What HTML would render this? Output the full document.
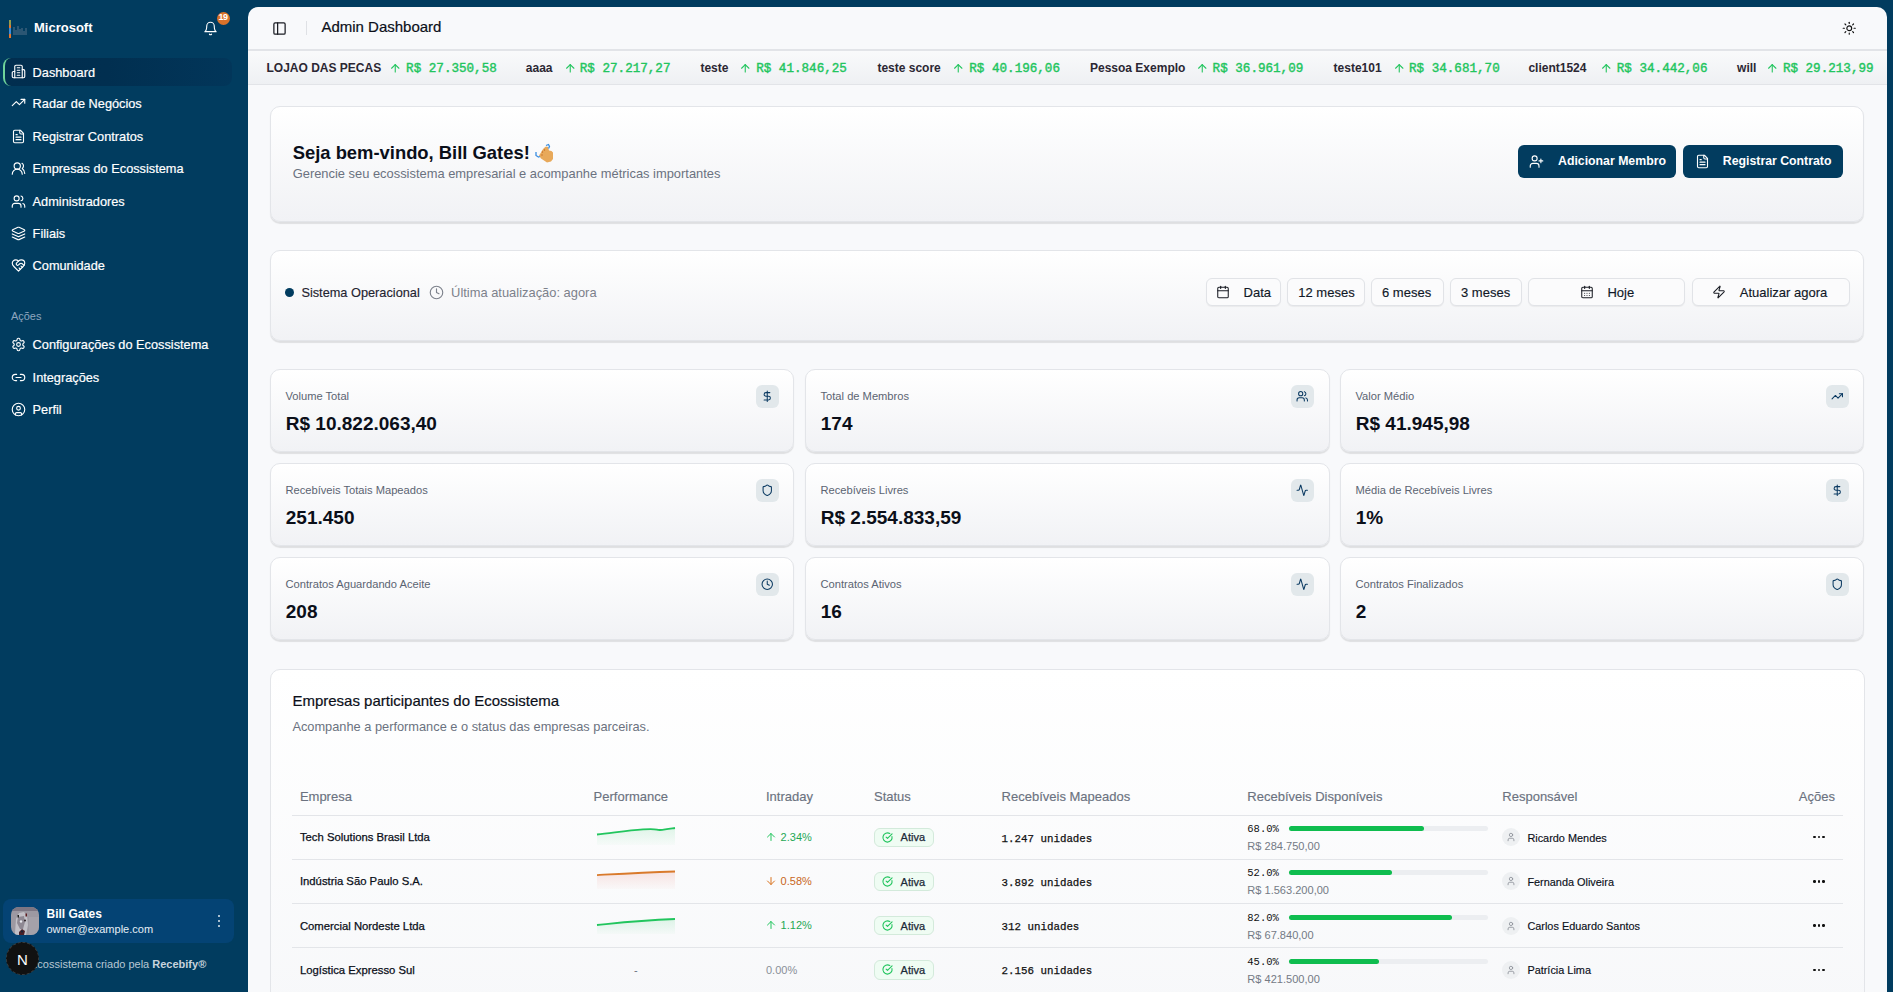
<!DOCTYPE html><html><head><meta charset="utf-8"><style>
*{box-sizing:border-box;margin:0;padding:0}
html,body{width:1893px;height:992px;overflow:hidden}
body{background:#013c5f;font-family:"Liberation Sans",sans-serif;position:relative}
.t{position:absolute;white-space:nowrap;line-height:1}
.i{position:absolute;display:block;overflow:visible}
.r{position:absolute}
</style></head><body><svg class="i" style="left:8px;top:19px" width="20" height="20" viewBox="0 0 20 20"><rect x="1" y="1" width="2" height="18" fill="#e8762c"/><rect x="1.5" y="1" width="1" height="5" fill="#3fbf6f"/><rect x="1" y="9" width="2" height="6" fill="#3a8bd8"/><path d="M6 8v8M8 11v5M10 7v9M12 10v6M14 9v7M16 12v4M18 9v7" stroke="#6c7f95" stroke-width="1" opacity=".8"/></svg>
<div class="t" style="left:34px;top:21.45px;font-size:13px;color:#fff;font-weight:bold;">Microsoft</div>
<svg class="i" style="left:203px;top:21px;" width="15" height="15" viewBox="0 0 24 24" fill="none" stroke="#fff" stroke-width="1.8" stroke-linecap="round" stroke-linejoin="round"><path d="M6 8a6 6 0 0 1 12 0c0 7 3 9 3 9H3s3-2 3-9"/><path d="M10.3 21a1.94 1.94 0 0 0 3.4 0"/></svg>
<div class="r" style="left:216.5px;top:11.5px;width:13px;height:13px;border-radius:50%;background:#d9722a"></div>
<div class="t" style="left:216.5px;top:12.5px;width:13px;text-align:center;font-size:9px;color:#fff;font-weight:bold;letter-spacing:-0.6px">19</div>
<div class="r" style="left:3px;top:58px;width:229px;height:28px;background:linear-gradient(90deg,#012e4f 0%,#012f50 45%,#02365a 100%);border-radius:8px;border-left:2px solid #6fd39a"></div>
<svg class="i" style="left:11px;top:64.4px;" width="15" height="15" viewBox="0 0 24 24" fill="none" stroke="#fff" stroke-width="1.8" stroke-linecap="round" stroke-linejoin="round"><path d="M6 22V4a2 2 0 0 1 2-2h8a2 2 0 0 1 2 2v18Z"/><path d="M6 12H4a2 2 0 0 0-2 2v6a2 2 0 0 0 2 2h2"/><path d="M18 9h2a2 2 0 0 1 2 2v9a2 2 0 0 1-2 2h-2"/><path d="M10 6h4"/><path d="M10 10h4"/><path d="M10 14h4"/><path d="M10 18h4"/></svg>
<div class="t" style="left:32.6px;top:66.56px;font-size:12.75px;color:#fff;-webkit-text-stroke:0.2px #fff">Dashboard</div>
<svg class="i" style="left:11px;top:95.4px;" width="15" height="15" viewBox="0 0 24 24" fill="none" stroke="#fff" stroke-width="1.8" stroke-linecap="round" stroke-linejoin="round"><polyline points="22 7 13.5 15.5 8.5 10.5 2 17"/><polyline points="16 7 22 7 22 13"/></svg>
<div class="t" style="left:32.6px;top:97.56px;font-size:12.75px;color:#fff;-webkit-text-stroke:0.2px #fff">Radar de Negócios</div>
<svg class="i" style="left:11px;top:128.8px;" width="15" height="15" viewBox="0 0 24 24" fill="none" stroke="#fff" stroke-width="1.8" stroke-linecap="round" stroke-linejoin="round"><path d="M15 2H6a2 2 0 0 0-2 2v16a2 2 0 0 0 2 2h12a2 2 0 0 0 2-2V7Z"/><path d="M14 2v4a2 2 0 0 0 2 2h4"/><path d="M10 9H8"/><path d="M16 13H8"/><path d="M16 17H8"/></svg>
<div class="t" style="left:32.6px;top:130.96px;font-size:12.75px;color:#fff;-webkit-text-stroke:0.2px #fff">Registrar Contratos</div>
<svg class="i" style="left:11px;top:161.0px;" width="15" height="15" viewBox="0 0 24 24" fill="none" stroke="#fff" stroke-width="1.8" stroke-linecap="round" stroke-linejoin="round"><path d="M18 21a8 8 0 0 0-16 0"/><circle cx="10" cy="8" r="5"/><path d="M22 20c0-3.37-2-6.5-4-8a5 5 0 0 0-.45-8.3"/></svg>
<div class="t" style="left:32.6px;top:163.16px;font-size:12.75px;color:#fff;-webkit-text-stroke:0.2px #fff">Empresas do Ecossistema</div>
<svg class="i" style="left:11px;top:193.6px;" width="15" height="15" viewBox="0 0 24 24" fill="none" stroke="#fff" stroke-width="1.8" stroke-linecap="round" stroke-linejoin="round"><path d="M16 21v-2a4 4 0 0 0-4-4H6a4 4 0 0 0-4 4v2"/><circle cx="9" cy="7" r="4"/><path d="M22 21v-2a4 4 0 0 0-3-3.87"/><path d="M16 3.13a4 4 0 0 1 0 7.75"/></svg>
<div class="t" style="left:32.6px;top:195.76px;font-size:12.75px;color:#fff;-webkit-text-stroke:0.2px #fff">Administradores</div>
<svg class="i" style="left:11px;top:225.7px;" width="15" height="15" viewBox="0 0 24 24" fill="none" stroke="#fff" stroke-width="1.8" stroke-linecap="round" stroke-linejoin="round"><path d="m12.83 2.18a2 2 0 0 0-1.66 0L2.6 6.08a1 1 0 0 0 0 1.83l8.58 3.91a2 2 0 0 0 1.66 0l8.58-3.9a1 1 0 0 0 0-1.83Z"/><path d="m22 17.65-9.17 4.16a2 2 0 0 1-1.66 0L2 17.65"/><path d="m22 12.65-9.17 4.16a2 2 0 0 1-1.66 0L2 12.65"/></svg>
<div class="t" style="left:32.6px;top:227.86px;font-size:12.75px;color:#fff;-webkit-text-stroke:0.2px #fff">Filiais</div>
<svg class="i" style="left:11px;top:258.0px;" width="15" height="15" viewBox="0 0 24 24" fill="none" stroke="#fff" stroke-width="1.8" stroke-linecap="round" stroke-linejoin="round"><path d="M19 14c1.49-1.46 3-3.21 3-5.5A5.5 5.5 0 0 0 16.5 3c-1.76 0-3 .5-4.5 2-1.5-1.5-2.74-2-4.5-2A5.5 5.5 0 0 0 2 8.5c0 2.3 1.5 4.05 3 5.5l7 7Z"/><path d="M12 5 9.04 7.96a2.17 2.17 0 0 0 0 3.08c.82.82 2.13.85 3 .07l2.07-1.9a2.82 2.82 0 0 1 3.79 0l2.96 2.66"/><path d="m18 15-2-2"/><path d="m15 18-2-2"/></svg>
<div class="t" style="left:32.6px;top:260.16px;font-size:12.75px;color:#fff;-webkit-text-stroke:0.2px #fff">Comunidade</div>
<div class="t" style="left:10.9px;top:310.65px;font-size:11px;color:#8ea6bf;">Ações</div>
<svg class="i" style="left:11px;top:336.7px;" width="15" height="15" viewBox="0 0 24 24" fill="none" stroke="#fff" stroke-width="1.8" stroke-linecap="round" stroke-linejoin="round"><path d="M12.22 2h-.44a2 2 0 0 0-2 2v.18a2 2 0 0 1-1 1.73l-.43.25a2 2 0 0 1-2 0l-.15-.08a2 2 0 0 0-2.73.73l-.22.38a2 2 0 0 0 .73 2.73l.15.1a2 2 0 0 1 1 1.72v.51a2 2 0 0 1-1 1.74l-.15.09a2 2 0 0 0-.73 2.73l.22.38a2 2 0 0 0 2.730.73l.15-.08a2 2 0 0 1 2 0l.43.25a2 2 0 0 1 1 1.73V20a2 2 0 0 0 2 2h.44a2 2 0 0 0 2-2v-.18a2 2 0 0 1 1-1.73l.43-.25a2 2 0 0 1 2 0l.15.08a2 2 0 0 0 2.73-.73l.22-.39a2 2 0 0 0-.73-2.730l-.15-.08a2 2 0 0 1-1-1.74v-.5a2 2 0 0 1 1-1.74l.15-.09a2 2 0 0 0 .73-2.73l-.22-.38a2 2 0 0 0-2.73-.73l-.15.08a2 2 0 0 1-2 0l-.43-.25a2 2 0 0 1-1-1.73V4a2 2 0 0 0-2-2z"/><circle cx="12" cy="12" r="3"/></svg>
<div class="t" style="left:32.6px;top:338.86px;font-size:12.75px;color:#fff;-webkit-text-stroke:0.2px #fff">Configurações do Ecossistema</div>
<svg class="i" style="left:11px;top:369.5px;" width="15" height="15" viewBox="0 0 24 24" fill="none" stroke="#fff" stroke-width="1.8" stroke-linecap="round" stroke-linejoin="round"><path d="M9 17H7A5 5 0 0 1 7 7h2"/><path d="M15 7h2a5 5 0 1 1 0 10h-2"/><line x1="8" x2="16" y1="12" y2="12"/></svg>
<div class="t" style="left:32.6px;top:371.66px;font-size:12.75px;color:#fff;-webkit-text-stroke:0.2px #fff">Integrações</div>
<svg class="i" style="left:11px;top:401.7px;" width="15" height="15" viewBox="0 0 24 24" fill="none" stroke="#fff" stroke-width="1.8" stroke-linecap="round" stroke-linejoin="round"><circle cx="12" cy="12" r="10"/><circle cx="12" cy="10" r="3"/><path d="M7 20.662V19a2 2 0 0 1 2-2h6a2 2 0 0 1 2 2v1.662"/></svg>
<div class="t" style="left:32.6px;top:403.86px;font-size:12.75px;color:#fff;-webkit-text-stroke:0.2px #fff">Perfil</div>
<div class="r" style="left:3px;top:899px;width:231px;height:44px;background:#044374;border-radius:8px"></div>
<svg class="i" style="left:11px;top:907px" width="28" height="28" viewBox="0 0 28 28"><defs><clipPath id="av"><rect width="28" height="28" rx="8"/></clipPath></defs><g clip-path="url(#av)"><rect width="28" height="28" fill="#9d99a2"/><rect x="0" y="0" width="28" height="4" fill="#7d7683"/><path d="M4 26 L5 12 L8 6 L13 5 L16 9 L17 18 L15 28 L3 28Z" fill="#c2c0c7"/><path d="M7 10 L13 9 L14 15 L12 22 L9 22 L6 16Z" fill="#8e8893"/><circle cx="10" cy="14.5" r="1.2" fill="#e8e8ee"/><circle cx="14" cy="13.5" r="1" fill="#2a1f25"/><rect x="6.5" y="8" width="1.5" height="2.5" fill="#222"/><rect x="14.5" y="6.5" width="1.5" height="3" fill="#5b1a1f"/><path d="M8 25 L11 22 L14 24 L13 28 L8 28Z" fill="#4a2028"/><circle cx="11" cy="24.5" r="1" fill="#12233a"/><rect x="18" y="10" width="10" height="18" fill="#a8a4ad" opacity=".7"/></g></svg>
<div class="t" style="left:46.5px;top:907.80px;font-size:12px;color:#fff;font-weight:bold;">Bill Gates</div>
<div class="t" style="left:46.5px;top:924.15px;font-size:11px;color:#e6eef5;">owner@example.com</div>
<div class="r" style="left:218px;top:915px;width:2.4px;height:2.4px;background:#dfe7ee;border-radius:50%"></div>
<div class="r" style="left:218px;top:920px;width:2.4px;height:2.4px;background:#dfe7ee;border-radius:50%"></div>
<div class="r" style="left:218px;top:925px;width:2.4px;height:2.4px;background:#dfe7ee;border-radius:50%"></div>
<div class="t" style="left:30px;top:959.15px;font-size:11px;color:#b8c7d4;">Ecossistema criado pela <b style="color:#c8d3dd">Recebify®</b></div>
<div class="r" style="left:6px;top:942px;width:33px;height:33px;border-radius:50%;background:#111;border:1px dashed #3a3a3a"></div>
<div class="t" style="left:17px;top:951.75px;font-size:15px;color:#fff;">N</div>
<div class="r" style="left:248px;top:7px;width:1639px;height:985px;background:#f8f9fb;border-radius:10px 10px 0 0"></div>
<svg class="i" style="left:272px;top:21px;" width="15" height="15" viewBox="0 0 24 24" fill="none" stroke="#1a1d24" stroke-width="2" stroke-linecap="round" stroke-linejoin="round"><rect width="18" height="18" x="3" y="3" rx="2"/><path d="M9 3v18"/></svg>
<div class="r" style="left:306px;top:21px;width:1px;height:14px;background:#dfe1e5"></div>
<div class="t" style="left:321.4px;top:18.95px;font-size:15px;color:#0b0f19;-webkit-text-stroke:0.2px #0b0f19">Admin Dashboard</div>
<svg class="i" style="left:1842px;top:20.5px;" width="14.5" height="14.5" viewBox="0 0 24 24" fill="none" stroke="#111" stroke-width="1.9" stroke-linecap="round" stroke-linejoin="round"><circle cx="12" cy="12" r="4"/><path d="M12 2v2"/><path d="M12 20v2"/><path d="m4.93 4.93 1.41 1.41"/><path d="m17.66 17.66 1.41 1.41"/><path d="M2 12h2"/><path d="M20 12h2"/><path d="m6.34 17.66-1.41 1.41"/><path d="m19.07 4.93-1.41 1.41"/></svg>
<div class="r" style="left:248px;top:49px;width:1639px;height:1.5px;background:#e2e4e8"></div>
<div class="r" style="left:248px;top:50.5px;width:1639px;height:34px;background:linear-gradient(#f9fafb,#eef0f3)"></div>
<div class="r" style="left:248px;top:84px;width:1639px;height:1px;background:#e2e4e8"></div>
<div class="t" style="left:266.5px;top:62.00px;font-size:12.0px;color:#2b2733;font-weight:bold;">LOJAO DAS PECAS</div>
<svg class="i" style="left:389.1px;top:62px;" width="12.5" height="12.5" viewBox="0 0 24 24" fill="none" stroke="#22c55e" stroke-width="2.1" stroke-linecap="round" stroke-linejoin="round"><path d="m5 12 7-7 7 7"/><path d="M12 19V5"/></svg>
<div class="t" style="left:406.1px;top:62.62px;font-size:12.6px;color:#22c55e;font-family:'Liberation Mono',monospace;-webkit-text-stroke:0.4px #22c55e">R$ 27.350,58</div>
<div class="t" style="left:525.8px;top:62.00px;font-size:12.0px;color:#2b2733;font-weight:bold;">aaaa</div>
<svg class="i" style="left:563.5px;top:62px;" width="12.5" height="12.5" viewBox="0 0 24 24" fill="none" stroke="#22c55e" stroke-width="2.1" stroke-linecap="round" stroke-linejoin="round"><path d="m5 12 7-7 7 7"/><path d="M12 19V5"/></svg>
<div class="t" style="left:579.8px;top:62.62px;font-size:12.6px;color:#22c55e;font-family:'Liberation Mono',monospace;-webkit-text-stroke:0.4px #22c55e">R$ 27.217,27</div>
<div class="t" style="left:700.4px;top:62.00px;font-size:12.0px;color:#2b2733;font-weight:bold;">teste</div>
<svg class="i" style="left:739.4px;top:62px;" width="12.5" height="12.5" viewBox="0 0 24 24" fill="none" stroke="#22c55e" stroke-width="2.1" stroke-linecap="round" stroke-linejoin="round"><path d="m5 12 7-7 7 7"/><path d="M12 19V5"/></svg>
<div class="t" style="left:756.2px;top:62.62px;font-size:12.6px;color:#22c55e;font-family:'Liberation Mono',monospace;-webkit-text-stroke:0.4px #22c55e">R$ 41.846,25</div>
<div class="t" style="left:877.4px;top:62.00px;font-size:12.0px;color:#2b2733;font-weight:bold;">teste score</div>
<svg class="i" style="left:952.3px;top:62px;" width="12.5" height="12.5" viewBox="0 0 24 24" fill="none" stroke="#22c55e" stroke-width="2.1" stroke-linecap="round" stroke-linejoin="round"><path d="m5 12 7-7 7 7"/><path d="M12 19V5"/></svg>
<div class="t" style="left:969.3px;top:62.62px;font-size:12.6px;color:#22c55e;font-family:'Liberation Mono',monospace;-webkit-text-stroke:0.4px #22c55e">R$ 40.196,06</div>
<div class="t" style="left:1090px;top:62.00px;font-size:12.0px;color:#2b2733;font-weight:bold;">Pessoa Exemplo</div>
<svg class="i" style="left:1196.1px;top:62px;" width="12.5" height="12.5" viewBox="0 0 24 24" fill="none" stroke="#22c55e" stroke-width="2.1" stroke-linecap="round" stroke-linejoin="round"><path d="m5 12 7-7 7 7"/><path d="M12 19V5"/></svg>
<div class="t" style="left:1212.6px;top:62.62px;font-size:12.6px;color:#22c55e;font-family:'Liberation Mono',monospace;-webkit-text-stroke:0.4px #22c55e">R$ 36.961,09</div>
<div class="t" style="left:1333.6px;top:62.00px;font-size:12.0px;color:#2b2733;font-weight:bold;">teste101</div>
<svg class="i" style="left:1392.5px;top:62px;" width="12.5" height="12.5" viewBox="0 0 24 24" fill="none" stroke="#22c55e" stroke-width="2.1" stroke-linecap="round" stroke-linejoin="round"><path d="m5 12 7-7 7 7"/><path d="M12 19V5"/></svg>
<div class="t" style="left:1409.0px;top:62.62px;font-size:12.6px;color:#22c55e;font-family:'Liberation Mono',monospace;-webkit-text-stroke:0.4px #22c55e">R$ 34.681,70</div>
<div class="t" style="left:1528.4px;top:62.00px;font-size:12.0px;color:#2b2733;font-weight:bold;">client1524</div>
<svg class="i" style="left:1600.2px;top:62px;" width="12.5" height="12.5" viewBox="0 0 24 24" fill="none" stroke="#22c55e" stroke-width="2.1" stroke-linecap="round" stroke-linejoin="round"><path d="m5 12 7-7 7 7"/><path d="M12 19V5"/></svg>
<div class="t" style="left:1616.8px;top:62.62px;font-size:12.6px;color:#22c55e;font-family:'Liberation Mono',monospace;-webkit-text-stroke:0.4px #22c55e">R$ 34.442,06</div>
<div class="t" style="left:1737.1px;top:62.00px;font-size:12.0px;color:#2b2733;font-weight:bold;">will</div>
<svg class="i" style="left:1766.3px;top:62px;" width="12.5" height="12.5" viewBox="0 0 24 24" fill="none" stroke="#22c55e" stroke-width="2.1" stroke-linecap="round" stroke-linejoin="round"><path d="m5 12 7-7 7 7"/><path d="M12 19V5"/></svg>
<div class="t" style="left:1782.9px;top:62.62px;font-size:12.6px;color:#22c55e;font-family:'Liberation Mono',monospace;-webkit-text-stroke:0.4px #22c55e">R$ 29.213,99</div>
<div class="r" style="left:270px;top:106px;width:1594px;height:116px;border-radius:10px;border:1px solid #e3e5e9;background:linear-gradient(#ffffff,#f1f2f5);box-shadow:0 1.5px 1px rgba(0,0,0,0.10)"></div>
<div class="t" style="left:292.7px;top:143.66px;font-size:18.4px;color:#0b0f19;font-weight:bold;">Seja bem-vindo, Bill Gates!</div>
<svg class="i" style="left:534px;top:142px" width="22" height="22" viewBox="0 0 22 22"><path d="M5 13.5 L7 10.5 L8 8.5 L10 6 L12 4.5 L14 5 L15 8.5 L17.5 9 L19 10.5 L19 17 L17 19.5 L13 20.5 L10 18.5 L7 16.5 Z" fill="#e8a95a"/><circle cx="10.5" cy="8" r=".7" fill="#c46a26"/><circle cx="8.5" cy="10" r=".7" fill="#c46a26"/><circle cx="8" cy="13" r=".7" fill="#c46a26"/><path d="M12 3.5 L14.5 2.5 L15.5 4.5 L14.5 6.5" stroke="#3b8ee0" stroke-width="1.3" fill="none"/><path d="M2 10 L2 13.5 L4.5 15 L6 14.5" stroke="#3b8ee0" stroke-width="1.3" fill="none"/></svg>
<div class="t" style="left:292.7px;top:167.73px;font-size:12.9px;color:#6b7280;">Gerencie seu ecossistema empresarial e acompanhe métricas importantes</div>
<div class="r" style="left:1518px;top:145px;width:158px;height:33px;background:#023c5f;border-radius:6px"></div>
<svg class="i" style="left:1529px;top:154px;" width="15" height="15" viewBox="0 0 24 24" fill="none" stroke="#fff" stroke-width="1.8" stroke-linecap="round" stroke-linejoin="round"><path d="M16 21v-2a4 4 0 0 0-4-4H6a4 4 0 0 0-4 4v2"/><circle cx="9" cy="7" r="4"/><line x1="19" x2="19" y1="8" y2="14"/><line x1="22" x2="16" y1="11" y2="11"/></svg>
<div class="t" style="left:1558px;top:154.74px;font-size:12.3px;color:#fff;font-weight:bold;">Adicionar Membro</div>
<div class="r" style="left:1683px;top:145px;width:160px;height:33px;background:#023c5f;border-radius:6px"></div>
<svg class="i" style="left:1695px;top:154px;" width="15" height="15" viewBox="0 0 24 24" fill="none" stroke="#fff" stroke-width="1.8" stroke-linecap="round" stroke-linejoin="round"><path d="M15 2H6a2 2 0 0 0-2 2v16a2 2 0 0 0 2 2h12a2 2 0 0 0 2-2V7Z"/><path d="M14 2v4a2 2 0 0 0 2 2h4"/><path d="M10 9H8"/><path d="M16 13H8"/><path d="M16 17H8"/></svg>
<div class="t" style="left:1722.8px;top:154.74px;font-size:12.3px;color:#fff;font-weight:bold;">Registrar Contrato</div>
<div class="r" style="left:270px;top:250px;width:1594px;height:91px;border-radius:10px;border:1px solid #e3e5e9;background:linear-gradient(#ffffff,#f1f2f5);box-shadow:0 1.5px 1px rgba(0,0,0,0.10)"></div>
<div class="r" style="left:285px;top:288.3px;width:9px;height:9px;border-radius:50%;background:#013c5f"></div>
<div class="t" style="left:301.4px;top:286.96px;font-size:12.75px;color:#1f2430;-webkit-text-stroke:0.15px #1f2430">Sistema Operacional</div>
<svg class="i" style="left:428.5px;top:285px;" width="15" height="15" viewBox="0 0 24 24" fill="none" stroke="#7c818b" stroke-width="1.8" stroke-linecap="round" stroke-linejoin="round"><circle cx="12" cy="12" r="10"/><polyline points="12 6 12 12 16 14"/></svg>
<div class="t" style="left:451.1px;top:286.84px;font-size:12.9px;color:#7c818b;">Última atualização: agora</div>
<div class="r" style="left:1206px;top:278px;width:75px;height:28px;background:#fbfbfc;border:1px solid #e1e3e7;border-radius:6px;box-shadow:0 1px 1px rgba(0,0,0,0.05)"></div>
<svg class="i" style="left:1216.3px;top:285px;" width="14" height="14" viewBox="0 0 24 24" fill="none" stroke="#1a1d24" stroke-width="1.8" stroke-linecap="round" stroke-linejoin="round"><path d="M8 2v4"/><path d="M16 2v4"/><rect width="18" height="18" x="3" y="4" rx="2"/><path d="M3 10h18"/></svg>
<div class="t" style="left:1243.6px;top:286.15px;font-size:13px;color:#111827;-webkit-text-stroke:0.15px #111827">Data</div>
<div class="r" style="left:1286.5px;top:278px;width:78.0px;height:28px;background:#fbfbfc;border:1px solid #e1e3e7;border-radius:6px;box-shadow:0 1px 1px rgba(0,0,0,0.05)"></div>
<div class="t" style="left:1298.3px;top:286.15px;font-size:13px;color:#111827;-webkit-text-stroke:0.15px #111827">12 meses</div>
<div class="r" style="left:1370.5px;top:278px;width:73.0px;height:28px;background:#fbfbfc;border:1px solid #e1e3e7;border-radius:6px;box-shadow:0 1px 1px rgba(0,0,0,0.05)"></div>
<div class="t" style="left:1382px;top:286.15px;font-size:13px;color:#111827;-webkit-text-stroke:0.15px #111827">6 meses</div>
<div class="r" style="left:1449.5px;top:278px;width:72.5px;height:28px;background:#fbfbfc;border:1px solid #e1e3e7;border-radius:6px;box-shadow:0 1px 1px rgba(0,0,0,0.05)"></div>
<div class="t" style="left:1461px;top:286.15px;font-size:13px;color:#111827;-webkit-text-stroke:0.15px #111827">3 meses</div>
<div class="r" style="left:1528px;top:278px;width:157px;height:28px;background:#fbfbfc;border:1px solid #e1e3e7;border-radius:6px;box-shadow:0 1px 1px rgba(0,0,0,0.05)"></div>
<svg class="i" style="left:1579.8px;top:285px;" width="14" height="14" viewBox="0 0 24 24" fill="none" stroke="#1a1d24" stroke-width="1.8" stroke-linecap="round" stroke-linejoin="round"><path d="M8 2v4"/><path d="M16 2v4"/><rect width="18" height="18" x="3" y="4" rx="2"/><path d="M3 10h18"/><path d="M8 14h.01"/><path d="M12 14h.01"/><path d="M16 14h.01"/><path d="M8 18h.01"/><path d="M12 18h.01"/><path d="M16 18h.01"/></svg>
<div class="t" style="left:1607.4px;top:286.15px;font-size:13px;color:#111827;-webkit-text-stroke:0.15px #111827">Hoje</div>
<div class="r" style="left:1691.5px;top:278px;width:158.5px;height:28px;background:#fbfbfc;border:1px solid #e1e3e7;border-radius:6px;box-shadow:0 1px 1px rgba(0,0,0,0.05)"></div>
<svg class="i" style="left:1712px;top:285px;" width="14" height="14" viewBox="0 0 24 24" fill="none" stroke="#1a1d24" stroke-width="1.8" stroke-linecap="round" stroke-linejoin="round"><path d="M4 14a1 1 0 0 1-.78-1.63l9.9-10.2a.5.5 0 0 1 .86.46l-1.92 6.02A1 1 0 0 0 13 10h7a1 1 0 0 1 .78 1.63l-9.9 10.2a.5.5 0 0 1-.86-.46l1.92-6.02A1 1 0 0 0 11 14z"/></svg>
<div class="t" style="left:1739.8px;top:286.15px;font-size:13px;color:#111827;-webkit-text-stroke:0.15px #111827">Atualizar agora</div>
<div class="r" style="left:270px;top:369px;width:524px;height:82.5px;border-radius:10px;border:1px solid #e3e5e9;background:linear-gradient(#ffffff,#f1f2f5);box-shadow:0 1.5px 1px rgba(0,0,0,0.10)"></div>
<div class="t" style="left:285.5px;top:391.02px;font-size:11.15px;color:#5b6472;">Volume Total</div>
<div class="t" style="left:285.8px;top:414.25px;font-size:19px;color:#0b0f19;font-weight:bold;">R$ 10.822.063,40</div>
<div class="r" style="left:755.8px;top:385px;width:22.8px;height:22.5px;background:#e2e8eb;border-radius:6px"></div>
<svg class="i" style="left:760.9px;top:390px;" width="12.5" height="12.5" viewBox="0 0 24 24" fill="none" stroke="#0b3a62" stroke-width="2" stroke-linecap="round" stroke-linejoin="round"><line x1="12" x2="12" y1="2" y2="22"/><path d="M17 5H9.5a3.5 3.5 0 0 0 0 7h5a3.5 3.5 0 0 1 0 7H6"/></svg>
<div class="r" style="left:805px;top:369px;width:525px;height:82.5px;border-radius:10px;border:1px solid #e3e5e9;background:linear-gradient(#ffffff,#f1f2f5);box-shadow:0 1.5px 1px rgba(0,0,0,0.10)"></div>
<div class="t" style="left:820.5px;top:391.02px;font-size:11.15px;color:#5b6472;">Total de Membros</div>
<div class="t" style="left:820.8px;top:414.25px;font-size:19px;color:#0b0f19;font-weight:bold;">174</div>
<div class="r" style="left:1290.8px;top:385px;width:22.8px;height:22.5px;background:#e2e8eb;border-radius:6px"></div>
<svg class="i" style="left:1295.9px;top:390px;" width="12.5" height="12.5" viewBox="0 0 24 24" fill="none" stroke="#0b3a62" stroke-width="2" stroke-linecap="round" stroke-linejoin="round"><path d="M16 21v-2a4 4 0 0 0-4-4H6a4 4 0 0 0-4 4v2"/><circle cx="9" cy="7" r="4"/><path d="M22 21v-2a4 4 0 0 0-3-3.87"/><path d="M16 3.13a4 4 0 0 1 0 7.75"/></svg>
<div class="r" style="left:1340px;top:369px;width:524px;height:82.5px;border-radius:10px;border:1px solid #e3e5e9;background:linear-gradient(#ffffff,#f1f2f5);box-shadow:0 1.5px 1px rgba(0,0,0,0.10)"></div>
<div class="t" style="left:1355.5px;top:391.02px;font-size:11.15px;color:#5b6472;">Valor Médio</div>
<div class="t" style="left:1355.8px;top:414.25px;font-size:19px;color:#0b0f19;font-weight:bold;">R$ 41.945,98</div>
<div class="r" style="left:1825.8px;top:385px;width:22.8px;height:22.5px;background:#e2e8eb;border-radius:6px"></div>
<svg class="i" style="left:1830.9px;top:390px;" width="12.5" height="12.5" viewBox="0 0 24 24" fill="none" stroke="#0b3a62" stroke-width="2" stroke-linecap="round" stroke-linejoin="round"><polyline points="22 7 13.5 15.5 8.5 10.5 2 17"/><polyline points="16 7 22 7 22 13"/></svg>
<div class="r" style="left:270px;top:463px;width:524px;height:82.5px;border-radius:10px;border:1px solid #e3e5e9;background:linear-gradient(#ffffff,#f1f2f5);box-shadow:0 1.5px 1px rgba(0,0,0,0.10)"></div>
<div class="t" style="left:285.5px;top:485.02px;font-size:11.15px;color:#5b6472;">Recebíveis Totais Mapeados</div>
<div class="t" style="left:285.8px;top:508.25px;font-size:19px;color:#0b0f19;font-weight:bold;">251.450</div>
<div class="r" style="left:755.8px;top:479px;width:22.8px;height:22.5px;background:#e2e8eb;border-radius:6px"></div>
<svg class="i" style="left:760.9px;top:484px;" width="12.5" height="12.5" viewBox="0 0 24 24" fill="none" stroke="#0b3a62" stroke-width="2" stroke-linecap="round" stroke-linejoin="round"><path d="M20 13c0 5-3.5 7.5-7.66 8.95a1 1 0 0 1-.67-.01C7.5 20.5 4 18 4 13V6a1 1 0 0 1 1-1c2 0 4.5-1.2 6.24-2.72a1.17 1.17 0 0 1 1.52 0C14.51 3.81 17 5 19 5a1 1 0 0 1 1 1z"/></svg>
<div class="r" style="left:805px;top:463px;width:525px;height:82.5px;border-radius:10px;border:1px solid #e3e5e9;background:linear-gradient(#ffffff,#f1f2f5);box-shadow:0 1.5px 1px rgba(0,0,0,0.10)"></div>
<div class="t" style="left:820.5px;top:485.02px;font-size:11.15px;color:#5b6472;">Recebíveis Livres</div>
<div class="t" style="left:820.8px;top:508.25px;font-size:19px;color:#0b0f19;font-weight:bold;">R$ 2.554.833,59</div>
<div class="r" style="left:1290.8px;top:479px;width:22.8px;height:22.5px;background:#e2e8eb;border-radius:6px"></div>
<svg class="i" style="left:1295.9px;top:484px;" width="12.5" height="12.5" viewBox="0 0 24 24" fill="none" stroke="#0b3a62" stroke-width="2" stroke-linecap="round" stroke-linejoin="round"><path d="M22 12h-2.48a2 2 0 0 0-1.93 1.46l-2.35 8.36a.25.25 0 0 1-.48 0L9.24 2.18a.25.25 0 0 0-.48 0l-2.35 8.36A2 2 0 0 1 4.49 12H2"/></svg>
<div class="r" style="left:1340px;top:463px;width:524px;height:82.5px;border-radius:10px;border:1px solid #e3e5e9;background:linear-gradient(#ffffff,#f1f2f5);box-shadow:0 1.5px 1px rgba(0,0,0,0.10)"></div>
<div class="t" style="left:1355.5px;top:485.02px;font-size:11.15px;color:#5b6472;">Média de Recebíveis Livres</div>
<div class="t" style="left:1355.8px;top:508.25px;font-size:19px;color:#0b0f19;font-weight:bold;">1%</div>
<div class="r" style="left:1825.8px;top:479px;width:22.8px;height:22.5px;background:#e2e8eb;border-radius:6px"></div>
<svg class="i" style="left:1830.9px;top:484px;" width="12.5" height="12.5" viewBox="0 0 24 24" fill="none" stroke="#0b3a62" stroke-width="2" stroke-linecap="round" stroke-linejoin="round"><line x1="12" x2="12" y1="2" y2="22"/><path d="M17 5H9.5a3.5 3.5 0 0 0 0 7h5a3.5 3.5 0 0 1 0 7H6"/></svg>
<div class="r" style="left:270px;top:557px;width:524px;height:82.5px;border-radius:10px;border:1px solid #e3e5e9;background:linear-gradient(#ffffff,#f1f2f5);box-shadow:0 1.5px 1px rgba(0,0,0,0.10)"></div>
<div class="t" style="left:285.5px;top:579.02px;font-size:11.15px;color:#5b6472;">Contratos Aguardando Aceite</div>
<div class="t" style="left:285.8px;top:602.25px;font-size:19px;color:#0b0f19;font-weight:bold;">208</div>
<div class="r" style="left:755.8px;top:573px;width:22.8px;height:22.5px;background:#e2e8eb;border-radius:6px"></div>
<svg class="i" style="left:760.9px;top:578px;" width="12.5" height="12.5" viewBox="0 0 24 24" fill="none" stroke="#0b3a62" stroke-width="2" stroke-linecap="round" stroke-linejoin="round"><circle cx="12" cy="12" r="10"/><polyline points="12 6 12 12 16 14"/></svg>
<div class="r" style="left:805px;top:557px;width:525px;height:82.5px;border-radius:10px;border:1px solid #e3e5e9;background:linear-gradient(#ffffff,#f1f2f5);box-shadow:0 1.5px 1px rgba(0,0,0,0.10)"></div>
<div class="t" style="left:820.5px;top:579.02px;font-size:11.15px;color:#5b6472;">Contratos Ativos</div>
<div class="t" style="left:820.8px;top:602.25px;font-size:19px;color:#0b0f19;font-weight:bold;">16</div>
<div class="r" style="left:1290.8px;top:573px;width:22.8px;height:22.5px;background:#e2e8eb;border-radius:6px"></div>
<svg class="i" style="left:1295.9px;top:578px;" width="12.5" height="12.5" viewBox="0 0 24 24" fill="none" stroke="#0b3a62" stroke-width="2" stroke-linecap="round" stroke-linejoin="round"><path d="M22 12h-2.48a2 2 0 0 0-1.93 1.46l-2.35 8.36a.25.25 0 0 1-.48 0L9.24 2.18a.25.25 0 0 0-.48 0l-2.35 8.36A2 2 0 0 1 4.49 12H2"/></svg>
<div class="r" style="left:1340px;top:557px;width:524px;height:82.5px;border-radius:10px;border:1px solid #e3e5e9;background:linear-gradient(#ffffff,#f1f2f5);box-shadow:0 1.5px 1px rgba(0,0,0,0.10)"></div>
<div class="t" style="left:1355.5px;top:579.02px;font-size:11.15px;color:#5b6472;">Contratos Finalizados</div>
<div class="t" style="left:1355.8px;top:602.25px;font-size:19px;color:#0b0f19;font-weight:bold;">2</div>
<div class="r" style="left:1825.8px;top:573px;width:22.8px;height:22.5px;background:#e2e8eb;border-radius:6px"></div>
<svg class="i" style="left:1830.9px;top:578px;" width="12.5" height="12.5" viewBox="0 0 24 24" fill="none" stroke="#0b3a62" stroke-width="2" stroke-linecap="round" stroke-linejoin="round"><path d="M20 13c0 5-3.5 7.5-7.66 8.95a1 1 0 0 1-.67-.01C7.5 20.5 4 18 4 13V6a1 1 0 0 1 1-1c2 0 4.5-1.2 6.24-2.72a1.17 1.17 0 0 1 1.52 0C14.51 3.81 17 5 19 5a1 1 0 0 1 1 1z"/></svg>
<div class="r" style="left:270px;top:669px;width:1595px;height:340px;border-radius:10px;border:1px solid #e3e5e9;background:linear-gradient(#ffffff 0,#f7f8fa 100%)"></div>
<div class="t" style="left:292.4px;top:693.35px;font-size:15.0px;color:#0b0f19;-webkit-text-stroke:0.2px #0b0f19">Empresas participantes do Ecossistema</div>
<div class="t" style="left:292.4px;top:721.42px;font-size:12.8px;color:#6b7280;">Acompanhe a performance e o status das empresas parceiras.</div>
<div class="t" style="left:299.9px;top:790.05px;font-size:13px;color:#6b7280;-webkit-text-stroke:0.15px #6b7280">Empresa</div>
<div class="t" style="left:593.6px;top:790.05px;font-size:13px;color:#6b7280;-webkit-text-stroke:0.15px #6b7280">Performance</div>
<div class="t" style="left:766px;top:790.05px;font-size:13px;color:#6b7280;-webkit-text-stroke:0.15px #6b7280">Intraday</div>
<div class="t" style="left:874px;top:790.05px;font-size:13px;color:#6b7280;-webkit-text-stroke:0.15px #6b7280">Status</div>
<div class="t" style="left:1001.6px;top:790.05px;font-size:13px;color:#6b7280;-webkit-text-stroke:0.15px #6b7280">Recebíveis Mapeados</div>
<div class="t" style="left:1247.3px;top:790.05px;font-size:13px;color:#6b7280;-webkit-text-stroke:0.15px #6b7280">Recebíveis Disponíveis</div>
<div class="t" style="left:1502.3px;top:790.05px;font-size:13px;color:#6b7280;-webkit-text-stroke:0.15px #6b7280">Responsável</div>
<div class="t" style="right:58px;top:790.05px;font-size:13px;color:#6b7280;-webkit-text-stroke:0.15px #6b7280">Ações</div>
<div class="r" style="left:292px;top:815px;width:1551px;height:1px;background:#e3e5e9"></div>
<div class="r" style="left:292px;top:859px;width:1551px;height:1px;background:#e3e5e9"></div>
<div class="r" style="left:292px;top:903px;width:1551px;height:1px;background:#e3e5e9"></div>
<div class="r" style="left:292px;top:947px;width:1551px;height:1px;background:#e3e5e9"></div>
<div class="t" style="left:299.9px;top:832.29px;font-size:11.3px;color:#0b0f19;-webkit-text-stroke:0.25px #0b0f19">Tech Solutions Brasil Ltda</div>
<svg class="i" style="left:597px;top:825.3px" width="78" height="20" viewBox="0 0 78 20"><defs><linearGradient id="g0" x1="0" y1="0" x2="0" y2="1"><stop offset="0" stop-color="#22c55e" stop-opacity="0.13"/><stop offset="1" stop-color="#22c55e" stop-opacity="0.02"/></linearGradient></defs><path d="M0 9.5 C15 8 30 5.5 46 4.4 S 58 5.2 63 5 S 72 4 78 3 L78 20 L0 20Z" fill="url(#g0)"/><path d="M0 9.5 C15 8 30 5.5 46 4.4 S 58 5.2 63 5 S 72 4 78 3" fill="none" stroke="#22c55e" stroke-width="1.8"/></svg>
<svg class="i" style="left:765.2px;top:830.9px;" width="12" height="12" viewBox="0 0 24 24" fill="none" stroke="#22c55e" stroke-width="2.0" stroke-linecap="round" stroke-linejoin="round"><path d="m5 12 7-7 7 7"/><path d="M12 19V5"/></svg>
<div class="t" style="left:780.6px;top:832.05px;font-size:11px;color:#1fa855;">2.34%</div>
<div class="r" style="left:874px;top:827.5px;width:60px;height:19.5px;background:#effcf3;border:1px solid #d3eadb;border-radius:6px"></div>
<svg class="i" style="left:881.5px;top:831.8px;" width="11" height="11" viewBox="0 0 24 24" fill="none" stroke="#22c55e" stroke-width="2.4" stroke-linecap="round" stroke-linejoin="round"><path d="M21.801 10A10 10 0 1 1 17 3.335"/><path d="m9 11 3 3L22 4"/></svg>
<div class="t" style="left:900.6px;top:832.35px;font-size:11px;color:#1c2a38;-webkit-text-stroke:0.25px #1c2a38">Ativa</div>
<div class="t" style="left:1001.6px;top:833.69px;font-size:10.8px;color:#111;font-family:'Liberation Mono',monospace;-webkit-text-stroke:0.25px #111">1.247 unidades</div>
<div class="t" style="left:1247.3px;top:824.32px;font-size:10.5px;color:#111;font-family:'Liberation Mono',monospace;">68.0%</div>
<div class="r" style="left:1289px;top:826.3px;width:199px;height:5px;background:#eceef1;border-radius:3px"></div>
<div class="r" style="left:1289px;top:826.3px;width:135.32px;height:5px;background:#0fbd4f;border-radius:3px"></div>
<div class="t" style="left:1247.3px;top:841.21px;font-size:11.05px;color:#747a85;">R$ 284.750,00</div>
<div class="r" style="left:1502px;top:828.3px;width:18px;height:18px;border-radius:50%;background:#eef0f2"></div>
<svg class="i" style="left:1506px;top:832.3px;" width="10" height="10" viewBox="0 0 24 24" fill="none" stroke="#8a8f98" stroke-width="2" stroke-linecap="round" stroke-linejoin="round"><path d="M19 21v-2a4 4 0 0 0-4-4H9a4 4 0 0 0-4 4v2"/><circle cx="12" cy="7" r="4"/></svg>
<div class="t" style="left:1527.4px;top:832.63px;font-size:10.9px;color:#0b0f19;-webkit-text-stroke:0.15px #0b0f19">Ricardo Mendes</div>
<div class="r" style="left:1813.3px;top:836.0999999999999px;width:2.4px;height:2.4px;border-radius:50%;background:#111"></div>
<div class="r" style="left:1817.8px;top:836.0999999999999px;width:2.4px;height:2.4px;border-radius:50%;background:#111"></div>
<div class="r" style="left:1822.3px;top:836.0999999999999px;width:2.4px;height:2.4px;border-radius:50%;background:#111"></div>
<div class="t" style="left:299.9px;top:876.46px;font-size:11.3px;color:#0b0f19;-webkit-text-stroke:0.25px #0b0f19">Indústria São Paulo S.A.</div>
<svg class="i" style="left:597px;top:869.4699999999999px" width="78" height="20" viewBox="0 0 78 20"><defs><linearGradient id="g1" x1="0" y1="0" x2="0" y2="1"><stop offset="0" stop-color="#e25b4a" stop-opacity="0.15"/><stop offset="1" stop-color="#e25b4a" stop-opacity="0.02"/></linearGradient></defs><path d="M0 6.1 C20 5 45 3.5 78 2.5 L78 20 L0 20Z" fill="url(#g1)"/><path d="M0 6.1 C20 5 45 3.5 78 2.5" fill="none" stroke="#d97a2b" stroke-width="1.8"/></svg>
<svg class="i" style="left:765.2px;top:875.0699999999999px;" width="12" height="12" viewBox="0 0 24 24" fill="none" stroke="#d9731f" stroke-width="2.0" stroke-linecap="round" stroke-linejoin="round"><path d="M12 5v14"/><path d="m19 12-7 7-7-7"/></svg>
<div class="t" style="left:780.6px;top:876.22px;font-size:11px;color:#c8661b;">0.58%</div>
<div class="r" style="left:874px;top:871.67px;width:60px;height:19.5px;background:#effcf3;border:1px solid #d3eadb;border-radius:6px"></div>
<svg class="i" style="left:881.5px;top:875.9699999999999px;" width="11" height="11" viewBox="0 0 24 24" fill="none" stroke="#22c55e" stroke-width="2.4" stroke-linecap="round" stroke-linejoin="round"><path d="M21.801 10A10 10 0 1 1 17 3.335"/><path d="m9 11 3 3L22 4"/></svg>
<div class="t" style="left:900.6px;top:876.52px;font-size:11px;color:#1c2a38;-webkit-text-stroke:0.25px #1c2a38">Ativa</div>
<div class="t" style="left:1001.6px;top:877.86px;font-size:10.8px;color:#111;font-family:'Liberation Mono',monospace;-webkit-text-stroke:0.25px #111">3.892 unidades</div>
<div class="t" style="left:1247.3px;top:868.49px;font-size:10.5px;color:#111;font-family:'Liberation Mono',monospace;">52.0%</div>
<div class="r" style="left:1289px;top:870.4699999999999px;width:199px;height:5px;background:#eceef1;border-radius:3px"></div>
<div class="r" style="left:1289px;top:870.4699999999999px;width:103.48px;height:5px;background:#0fbd4f;border-radius:3px"></div>
<div class="t" style="left:1247.3px;top:885.38px;font-size:11.05px;color:#747a85;">R$ 1.563.200,00</div>
<div class="r" style="left:1502px;top:872.4699999999999px;width:18px;height:18px;border-radius:50%;background:#eef0f2"></div>
<svg class="i" style="left:1506px;top:876.4699999999999px;" width="10" height="10" viewBox="0 0 24 24" fill="none" stroke="#8a8f98" stroke-width="2" stroke-linecap="round" stroke-linejoin="round"><path d="M19 21v-2a4 4 0 0 0-4-4H9a4 4 0 0 0-4 4v2"/><circle cx="12" cy="7" r="4"/></svg>
<div class="t" style="left:1527.4px;top:876.80px;font-size:10.9px;color:#0b0f19;-webkit-text-stroke:0.15px #0b0f19">Fernanda Oliveira</div>
<div class="r" style="left:1813.3px;top:880.2699999999999px;width:2.4px;height:2.4px;border-radius:50%;background:#111"></div>
<div class="r" style="left:1817.8px;top:880.2699999999999px;width:2.4px;height:2.4px;border-radius:50%;background:#111"></div>
<div class="r" style="left:1822.3px;top:880.2699999999999px;width:2.4px;height:2.4px;border-radius:50%;background:#111"></div>
<div class="t" style="left:299.9px;top:920.63px;font-size:11.3px;color:#0b0f19;-webkit-text-stroke:0.25px #0b0f19">Comercial Nordeste Ltda</div>
<svg class="i" style="left:597px;top:913.64px" width="78" height="20" viewBox="0 0 78 20"><defs><linearGradient id="g2" x1="0" y1="0" x2="0" y2="1"><stop offset="0" stop-color="#22c55e" stop-opacity="0.13"/><stop offset="1" stop-color="#22c55e" stop-opacity="0.02"/></linearGradient></defs><path d="M0 11 C20 9 40 6.5 78 5 L78 20 L0 20Z" fill="url(#g2)"/><path d="M0 11 C20 9 40 6.5 78 5" fill="none" stroke="#22c55e" stroke-width="1.8"/></svg>
<svg class="i" style="left:765.2px;top:919.24px;" width="12" height="12" viewBox="0 0 24 24" fill="none" stroke="#22c55e" stroke-width="2.0" stroke-linecap="round" stroke-linejoin="round"><path d="m5 12 7-7 7 7"/><path d="M12 19V5"/></svg>
<div class="t" style="left:780.6px;top:920.39px;font-size:11px;color:#1fa855;">1.12%</div>
<div class="r" style="left:874px;top:915.84px;width:60px;height:19.5px;background:#effcf3;border:1px solid #d3eadb;border-radius:6px"></div>
<svg class="i" style="left:881.5px;top:920.14px;" width="11" height="11" viewBox="0 0 24 24" fill="none" stroke="#22c55e" stroke-width="2.4" stroke-linecap="round" stroke-linejoin="round"><path d="M21.801 10A10 10 0 1 1 17 3.335"/><path d="m9 11 3 3L22 4"/></svg>
<div class="t" style="left:900.6px;top:920.69px;font-size:11px;color:#1c2a38;-webkit-text-stroke:0.25px #1c2a38">Ativa</div>
<div class="t" style="left:1001.6px;top:922.03px;font-size:10.8px;color:#111;font-family:'Liberation Mono',monospace;-webkit-text-stroke:0.25px #111">312 unidades</div>
<div class="t" style="left:1247.3px;top:912.66px;font-size:10.5px;color:#111;font-family:'Liberation Mono',monospace;">82.0%</div>
<div class="r" style="left:1289px;top:914.64px;width:199px;height:5px;background:#eceef1;border-radius:3px"></div>
<div class="r" style="left:1289px;top:914.64px;width:163.18px;height:5px;background:#0fbd4f;border-radius:3px"></div>
<div class="t" style="left:1247.3px;top:929.55px;font-size:11.05px;color:#747a85;">R$ 67.840,00</div>
<div class="r" style="left:1502px;top:916.64px;width:18px;height:18px;border-radius:50%;background:#eef0f2"></div>
<svg class="i" style="left:1506px;top:920.64px;" width="10" height="10" viewBox="0 0 24 24" fill="none" stroke="#8a8f98" stroke-width="2" stroke-linecap="round" stroke-linejoin="round"><path d="M19 21v-2a4 4 0 0 0-4-4H9a4 4 0 0 0-4 4v2"/><circle cx="12" cy="7" r="4"/></svg>
<div class="t" style="left:1527.4px;top:920.98px;font-size:10.9px;color:#0b0f19;-webkit-text-stroke:0.15px #0b0f19">Carlos Eduardo Santos</div>
<div class="r" style="left:1813.3px;top:924.4399999999999px;width:2.4px;height:2.4px;border-radius:50%;background:#111"></div>
<div class="r" style="left:1817.8px;top:924.4399999999999px;width:2.4px;height:2.4px;border-radius:50%;background:#111"></div>
<div class="r" style="left:1822.3px;top:924.4399999999999px;width:2.4px;height:2.4px;border-radius:50%;background:#111"></div>
<div class="t" style="left:299.9px;top:964.80px;font-size:11.3px;color:#0b0f19;-webkit-text-stroke:0.25px #0b0f19">Logística Expresso Sul</div>
<div class="t" style="left:634px;top:965.06px;font-size:11px;color:#6b7280;">-</div>
<div class="t" style="left:766px;top:965.06px;font-size:11px;color:#8a8f98;">0.00%</div>
<div class="r" style="left:874px;top:960.01px;width:60px;height:19.5px;background:#effcf3;border:1px solid #d3eadb;border-radius:6px"></div>
<svg class="i" style="left:881.5px;top:964.31px;" width="11" height="11" viewBox="0 0 24 24" fill="none" stroke="#22c55e" stroke-width="2.4" stroke-linecap="round" stroke-linejoin="round"><path d="M21.801 10A10 10 0 1 1 17 3.335"/><path d="m9 11 3 3L22 4"/></svg>
<div class="t" style="left:900.6px;top:964.86px;font-size:11px;color:#1c2a38;-webkit-text-stroke:0.25px #1c2a38">Ativa</div>
<div class="t" style="left:1001.6px;top:966.20px;font-size:10.8px;color:#111;font-family:'Liberation Mono',monospace;-webkit-text-stroke:0.25px #111">2.156 unidades</div>
<div class="t" style="left:1247.3px;top:956.83px;font-size:10.5px;color:#111;font-family:'Liberation Mono',monospace;">45.0%</div>
<div class="r" style="left:1289px;top:958.81px;width:199px;height:5px;background:#eceef1;border-radius:3px"></div>
<div class="r" style="left:1289px;top:958.81px;width:89.55px;height:5px;background:#0fbd4f;border-radius:3px"></div>
<div class="t" style="left:1247.3px;top:973.72px;font-size:11.05px;color:#747a85;">R$ 421.500,00</div>
<div class="r" style="left:1502px;top:960.81px;width:18px;height:18px;border-radius:50%;background:#eef0f2"></div>
<svg class="i" style="left:1506px;top:964.81px;" width="10" height="10" viewBox="0 0 24 24" fill="none" stroke="#8a8f98" stroke-width="2" stroke-linecap="round" stroke-linejoin="round"><path d="M19 21v-2a4 4 0 0 0-4-4H9a4 4 0 0 0-4 4v2"/><circle cx="12" cy="7" r="4"/></svg>
<div class="t" style="left:1527.4px;top:965.14px;font-size:10.9px;color:#0b0f19;-webkit-text-stroke:0.15px #0b0f19">Patrícia Lima</div>
<div class="r" style="left:1813.3px;top:968.6099999999999px;width:2.4px;height:2.4px;border-radius:50%;background:#111"></div>
<div class="r" style="left:1817.8px;top:968.6099999999999px;width:2.4px;height:2.4px;border-radius:50%;background:#111"></div>
<div class="r" style="left:1822.3px;top:968.6099999999999px;width:2.4px;height:2.4px;border-radius:50%;background:#111"></div>
<div class="r" style="left:1887px;top:0px;width:6px;height:992px;background:#013c5f"></div></body></html>
